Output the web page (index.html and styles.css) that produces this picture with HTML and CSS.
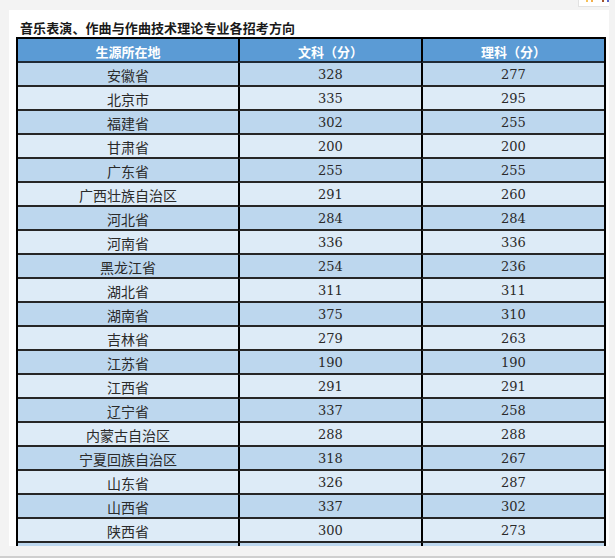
FILE: index.html
```html
<!DOCTYPE html>
<html lang="zh-CN">
<head>
<meta charset="utf-8">
<title>音乐表演、作曲与作曲技术理论专业各招考方向</title>
<link rel="stylesheet" href="styles.css">
</head>
<body>
<div class="corner-tab">
  <span class="dot dot-a"></span><span class="dot dot-b"></span><span class="dot dot-c"></span><span class="dot dot-d"></span><span class="dot dot-e"></span>
</div>
<div class="panel">
  <h1 class="title">音乐表演、作曲与作曲技术理论专业各招考方向</h1>
  <table class="score-table">
    <colgroup>
      <col class="c1"><col class="c2"><col class="c3">
    </colgroup>
    <thead>
      <tr><th>生源所在地</th><th>文科（分）</th><th>理科（分）</th></tr>
    </thead>
    <tbody>
      <tr><td>安徽省</td><td>328</td><td>277</td></tr>
      <tr><td>北京市</td><td>335</td><td>295</td></tr>
      <tr><td>福建省</td><td>302</td><td>255</td></tr>
      <tr><td>甘肃省</td><td>200</td><td>200</td></tr>
      <tr><td>广东省</td><td>255</td><td>255</td></tr>
      <tr><td>广西壮族自治区</td><td>291</td><td>260</td></tr>
      <tr><td>河北省</td><td>284</td><td>284</td></tr>
      <tr><td>河南省</td><td>336</td><td>336</td></tr>
      <tr><td>黑龙江省</td><td>254</td><td>236</td></tr>
      <tr><td>湖北省</td><td>311</td><td>311</td></tr>
      <tr><td>湖南省</td><td>375</td><td>310</td></tr>
      <tr><td>吉林省</td><td>279</td><td>263</td></tr>
      <tr><td>江苏省</td><td>190</td><td>190</td></tr>
      <tr><td>江西省</td><td>291</td><td>291</td></tr>
      <tr><td>辽宁省</td><td>337</td><td>258</td></tr>
      <tr><td>内蒙古自治区</td><td>288</td><td>288</td></tr>
      <tr><td>宁夏回族自治区</td><td>318</td><td>267</td></tr>
      <tr><td>山东省</td><td>326</td><td>287</td></tr>
      <tr><td>山西省</td><td>337</td><td>302</td></tr>
      <tr><td>陕西省</td><td>300</td><td>273</td></tr>
      <tr><td></td><td></td><td></td></tr>
    </tbody>
  </table>
</div>
<div class="bottom-line"></div>
</body>
</html>
```

FILE: styles.css
```css
html, body {
  margin: 0;
  padding: 0;
}
body {
  background: #f3f3f3;
  width: 615px;
  height: 558px;
  overflow: hidden;
  position: relative;
  font-family: "Noto Sans CJK SC", "Noto Sans", sans-serif;
}
.corner-tab {
  position: absolute;
  left: 578px;
  top: 0;
  width: 31px;
  height: 7px;
  background: #ffffff;
  border-left: 1px solid #e2e2e2;
  border-bottom: 1px solid #e2e2e2;
  display: flex;
  gap: 3px;
  padding-left: 7px;
  box-sizing: border-box;
}
.dot {
  width: 3px;
  height: 2px;
  display: block;
}
.dot-a { background: #f6c25a; }
.dot-b { background: #f3b04c; }
.dot-c { background: #ffffff; }
.dot-d { background: #a0522d; }
.dot-e { background: #5865c9; }
.panel {
  margin: 10px 0 0 9px;
  width: 600px;
  height: 536px;
  background: #ffffff;
  overflow: hidden;
  padding: 0 0 0 7px;
  box-sizing: border-box;
}
.title {
  margin: 0;
  padding: 10px 0 1px 4px;
  font-size: 13px;
  line-height: 16px;
  font-weight: 700;
  color: #1a1a1a;
  letter-spacing: 0.1px;
}
.score-table {
  width: 590px;
  box-sizing: border-box;
  table-layout: fixed;
  border-collapse: separate;
  border-spacing: 0;
  border: 2px solid #000;
}
.c1 { width: 220px; }
.c2 { width: 183px; }
.c3 { width: 183px; }
.score-table th,
.score-table td {
  padding: 2px 0 0 0;
  height: 20px;
  line-height: 20px;
  text-align: center;
  border-bottom: 2px solid #262626;
  white-space: nowrap;
  overflow: hidden;
}
.score-table th + th,
.score-table td + td {
  border-left: 2px solid #000;
}
.score-table th {
  padding-top: 3px;
  height: 19px;
  line-height: 19px;
  background: #5b9bd5;
  color: #ffffff;
  font-size: 13px;
  font-weight: 700;
  border-bottom-color: #1f2a36;
}
.score-table td {
  font-size: 14px;
  color: #2a2a2a;
}
.score-table td + td {
  font-family: "DejaVu Serif", "Liberation Serif", serif;
  font-size: 13px;
}
.score-table tbody tr:nth-child(odd) td {
  background: #bdd7ee;
}
.score-table tbody tr:nth-child(even) td {
  background: #ddebf7;
}
.bottom-line {
  margin-top: 10px;
  height: 2px;
  background: #cfcfcf;
}
```
